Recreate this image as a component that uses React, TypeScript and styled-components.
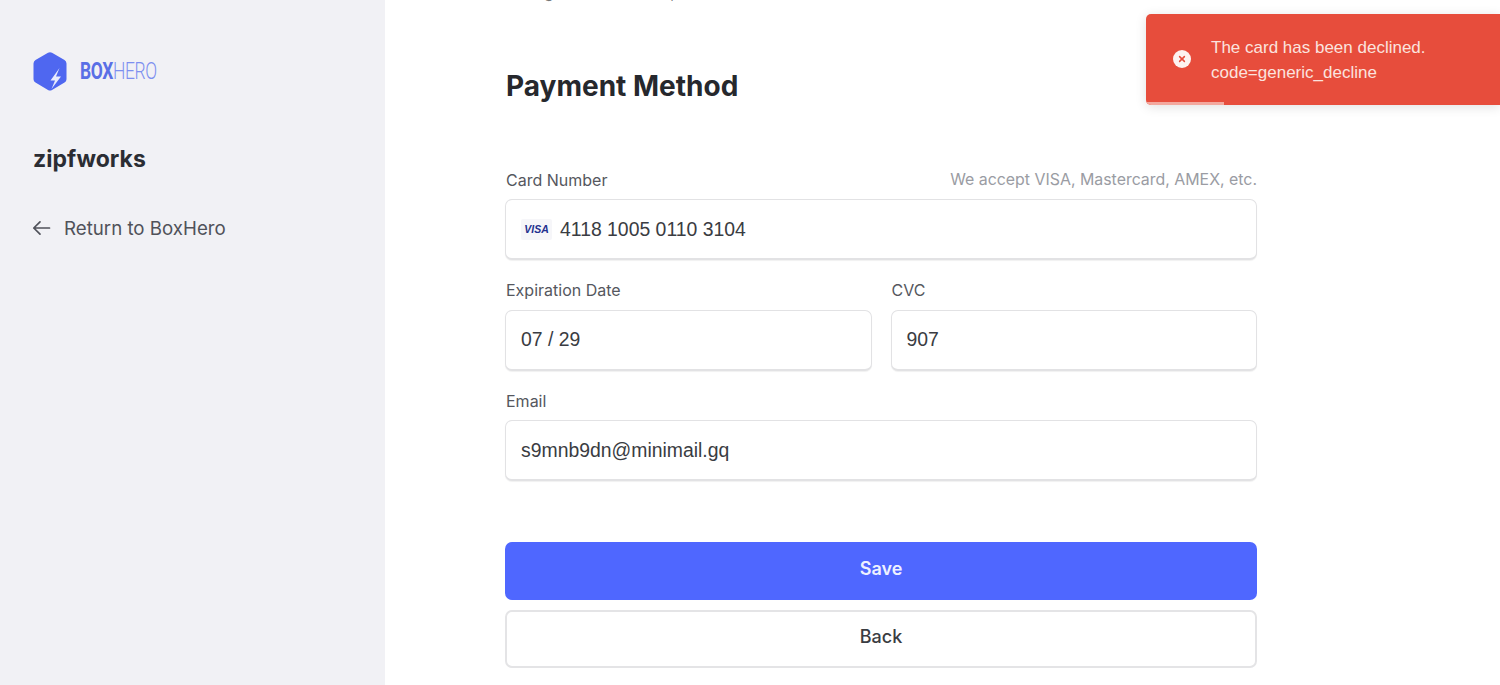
import React from "react";
import styled, { createGlobalStyle } from "styled-components";

const Global = createGlobalStyle`
  html, body { margin: 0; padding: 0; height: 100%; background: #fff; overflow: hidden; }
  body { font-family: Inter, "Liberation Sans", sans-serif; color: #2b2d33; }
  * { box-sizing: border-box; }
`;

const Page = styled.div`
  display: grid;
  grid-template-columns: 385px 1fr;
  height: 685px;
  overflow: hidden;
`;

const Sidebar = styled.aside`
  background: #f1f1f5;
  padding: 51px 0 0 32px;
  display: flex;
  flex-direction: column;
`;

const Logo = styled.div`
  display: flex;
  align-items: center;
  gap: 12px;
  height: 41px;
`;

const LogoWord = styled.span`
  font-family: "Roboto", sans-serif;
  font-size: 23px;
  color: #5a6fe6;
  letter-spacing: -0.5px;
  display: inline-block;
  transform: scaleX(0.76);
  transform-origin: left center;
  line-height: 1;
`;

const LogoBold = styled.b`
  font-weight: 700;
`;

const LogoLight = styled.span`
  font-weight: 300;
  color: #7d8ff0;
`;

const Company = styled.h2`
  margin: 52px 0 0;
  padding-left: 1px;
  font-size: 23px;
  line-height: 30px;
  font-weight: 700;
  color: #2b2d33;
`;

const ReturnLink = styled.a`
  margin-top: 42px;
  display: flex;
  align-items: center;
  gap: 13px;
  font-size: 18.7px;
  line-height: 26px;
  color: #50525a;
`;

const ArrowSlot = styled.span`
  display: flex;
  margin-top: -3px;
`;

const Main = styled.main`
  padding: 0 243px 0 120px;
  display: flex;
  flex-direction: column;
  position: relative;
`;

const CutOff = styled.div`
  margin-top: -17px;
  height: 20px;
  font-size: 15px;
  line-height: 20px;
  color: #777;
  white-space: nowrap;
`;

const Title = styled.h1`
  margin: 65px 0 0;
  padding-left: 1px;
  font-size: 28px;
  line-height: 36px;
  font-weight: 700;
  color: #26282d;
`;

const Form = styled.div`
  margin-top: 64.5px;
  display: flex;
  flex-direction: column;
`;

const LabelRow = styled.div`
  display: flex;
  justify-content: space-between;
  align-items: center;
  height: 22.5px;
  margin-bottom: 8px;
`;

const Label = styled.label`
  padding-left: 1px;
  font-size: 16px;
  color: #55575e;
`;

const Hint = styled.span`
  font-size: 15.9px;
  color: #9a9ca3;
`;

const InputBox = styled.div`
  height: 61px;
  border: 1.5px solid #e2e2e4;
  border-bottom-width: 2px;
  border-radius: 7px;
  background: #fff;
  box-shadow: 0 1px 1px rgba(0, 0, 0, 0.06);
  display: flex;
  align-items: center;
  padding: 0 15px;
  gap: 8px;
  font-family: "Liberation Sans", Arial, sans-serif;
  font-size: 19.4px;
  color: #3a3c42;
`;

const Field = styled.div`
  flex: 1;
  min-width: 0;
  display: flex;
  flex-direction: column;
  margin-bottom: 19px;
`;

const Row = styled.div`
  display: grid;
  grid-template-columns: 1fr 1fr;
  gap: 19px;
`;

const Actions = styled.div`
  margin-top: 41.5px;
  display: flex;
  flex-direction: column;
  gap: 10px;
`;

const Button = styled.button<{ $primary?: boolean }>`
  height: 58px;
  border-radius: 7px;
  padding: 0 0 5px;
  font-family: inherit;
  font-size: 18px;
  font-weight: ${(p) => (p.$primary ? 600 : 500)};
  color: ${(p) => (p.$primary ? "#eef1ff" : "#3a3c42")};
  background: ${(p) => (p.$primary ? "#4f67ff" : "#fff")};
  border: ${(p) => (p.$primary ? "none" : "2px solid #e4e4e6")};
`;

const Toast = styled.div`
  position: absolute;
  top: 14px;
  right: 0;
  width: 354px;
  height: 91px;
  background: #e74d3c;
  border-radius: 5px 0 0 5px;
  box-shadow: 0 2px 12px rgba(0, 0, 0, 0.12);
  display: flex;
  align-items: center;
  gap: 20px;
  padding: 0 0 1px 27px;
  color: #fbe3df;
  font-family: "Liberation Sans", Arial, sans-serif;
  font-size: 17px;
  line-height: 25px;
  overflow: hidden;
`;

const ToastText = styled.div`
  margin-top: 2px;
`;

const ToastProgress = styled.div`
  position: absolute;
  left: 0;
  bottom: 0;
  width: 78px;
  height: 3px;
  background: #f3a89e;
`;

const ToastIcon = () => (
  <svg width="18" height="18" viewBox="0 0 18 18" style={{ flexShrink: 0 }}>
    <circle cx="9" cy="9" r="9" fill="#fdf3f1" />
    <path d="M6.6 6.6l4.8 4.8M11.4 6.6l-4.8 4.8" stroke="#e74d3c" strokeWidth="1.5" strokeLinecap="round" />
  </svg>
);

const BoxLogo = () => (
  <svg width="36" height="41" viewBox="0 0 36 41">
    <path d="M16 1.8a4 4 0 0 1 4 0l12.5 7.2a4 4 0 0 1 2 3.4v15.8a4 4 0 0 1-2 3.4L20 39a4 4 0 0 1-4 0L3.500 31.600a4 4 0 0 1-2-3.400V12.400a4 4 0 0 1 2-3.400z" fill="#4f67f0" />
    <path d="M27.500 17l-9 12.500h4.500L19.500 38l9.500-12.500h-5L27.500 17z" fill="#e8ebfd" />
  </svg>
);

const VisaBadge = styled.span`
  width: 31px;
  height: 21px;
  background: #f6f6f9;
  border-radius: 2px;
  display: flex;
  align-items: center;
  justify-content: center;
  font-family: "Liberation Sans", sans-serif;
  font-size: 10.5px;
  font-weight: 700;
  font-style: italic;
  color: #23308f;
`;

const BackArrow = () => (
  <svg width="19" height="16" viewBox="0 0 19 16" fill="none" stroke="#50525a" strokeWidth="1.7" strokeLinecap="round" strokeLinejoin="round">
    <path d="M17.500 8H1.800M8 1.800L1.800 8 8 14.200" />
  </svg>
);

export default function App() {
  return (
    <Page>
      <Global />
      <Sidebar>
        <Logo>
          <BoxLogo />
          <LogoWord>
            <LogoBold>BOX</LogoBold>
            <LogoLight>HERO</LogoLight>
          </LogoWord>
        </Logo>
        <Company>zipfworks</Company>
        <ReturnLink>
          <ArrowSlot>
            <BackArrow />
          </ArrowSlot>
          Return to BoxHero
        </ReturnLink>
      </Sidebar>
      <Main>
        <CutOff>Manage the card below,</CutOff>
        <Title>Payment Method</Title>
        <Form>
          <Field>
            <LabelRow>
              <Label>Card Number</Label>
              <Hint>We accept VISA, Mastercard, AMEX, etc.</Hint>
            </LabelRow>
            <InputBox>
              <VisaBadge>VISA</VisaBadge>
              4118 1005 0110 3104
            </InputBox>
          </Field>
          <Row>
            <Field>
              <LabelRow>
                <Label>Expiration Date</Label>
              </LabelRow>
              <InputBox>07 / 29</InputBox>
            </Field>
            <Field>
              <LabelRow>
                <Label>CVC</Label>
              </LabelRow>
              <InputBox>907</InputBox>
            </Field>
          </Row>
          <Field>
            <LabelRow>
              <Label>Email</Label>
            </LabelRow>
            <InputBox>s9mnb9dn@minimail.gq</InputBox>
          </Field>
        </Form>
        <Actions>
          <Button $primary>Save</Button>
          <Button>Back</Button>
        </Actions>
        <Toast>
          <ToastIcon />
          <ToastText>
            The card has been declined.
            <br />
            code=generic_decline
          </ToastText>
          <ToastProgress />
        </Toast>
      </Main>
    </Page>
  );
}
